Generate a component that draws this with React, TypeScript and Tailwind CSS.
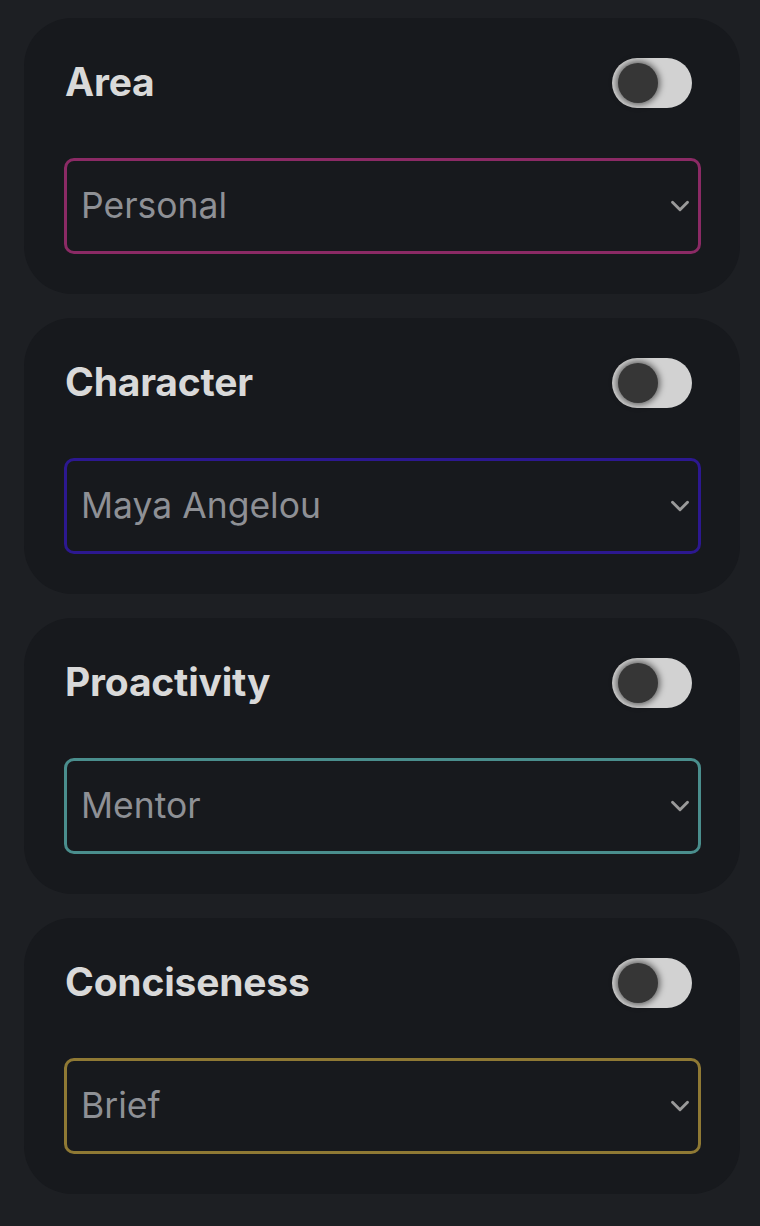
import { ChevronDown } from "lucide-react";

interface SettingCardProps {
  title: string;
  value: string;
  borderClass: string;
}

function Toggle() {
  return (
    <div className="mr-[9px] flex h-[50px] w-[80px] items-center rounded-full bg-[#d2d2d2] px-[6px]">
      <div className="h-[40px] w-[40px] rounded-full bg-[#363636] shadow-[0_0_6px_2px_rgba(0,0,0,0.55)]" />
    </div>
  );
}

function SettingCard({ title, value, borderClass }: SettingCardProps) {
  return (
    <div className="rounded-[48px] bg-[#17191d] py-[40px] pl-[40px] pr-[39px]">
      <div className="flex h-[50px] items-center justify-between">
        <h2 className="pl-px pb-[4px] text-[39px] font-bold leading-none tracking-[-0.2px] text-[#d9d9d9]">
          {title}
        </h2>
        <Toggle />
      </div>
      <div
        className={`mt-[50px] flex h-[96px] items-center justify-between rounded-[10px] border-[3px] bg-[#17191d] pl-[14px] pr-[3px] ${borderClass}`}
      >
        <span className="text-[35.5px] leading-none text-[#8e9095]">{value}</span>
        <ChevronDown size={30} strokeWidth={2.3} className="text-[#9a9a9a]" />
      </div>
    </div>
  );
}

export default function App() {
  return (
    <div
      className="min-h-[1226px] bg-[#1d1f23] pt-[18px] pb-[32px] pl-[24px] pr-[20px]"
      style={{ fontFamily: "Inter, 'Noto Sans', sans-serif" }}
    >
      <div className="flex flex-col gap-[24px]">
        <SettingCard title="Area" value="Personal" borderClass="border-[#8b2a65]" />
        <SettingCard title="Character" value="Maya Angelou" borderClass="border-[#2c1890]" />
        <SettingCard title="Proactivity" value="Mentor" borderClass="border-[#4a8e8d]" />
        <SettingCard title="Conciseness" value="Brief" borderClass="border-[#8f7934]" />
      </div>
    </div>
  );
}
